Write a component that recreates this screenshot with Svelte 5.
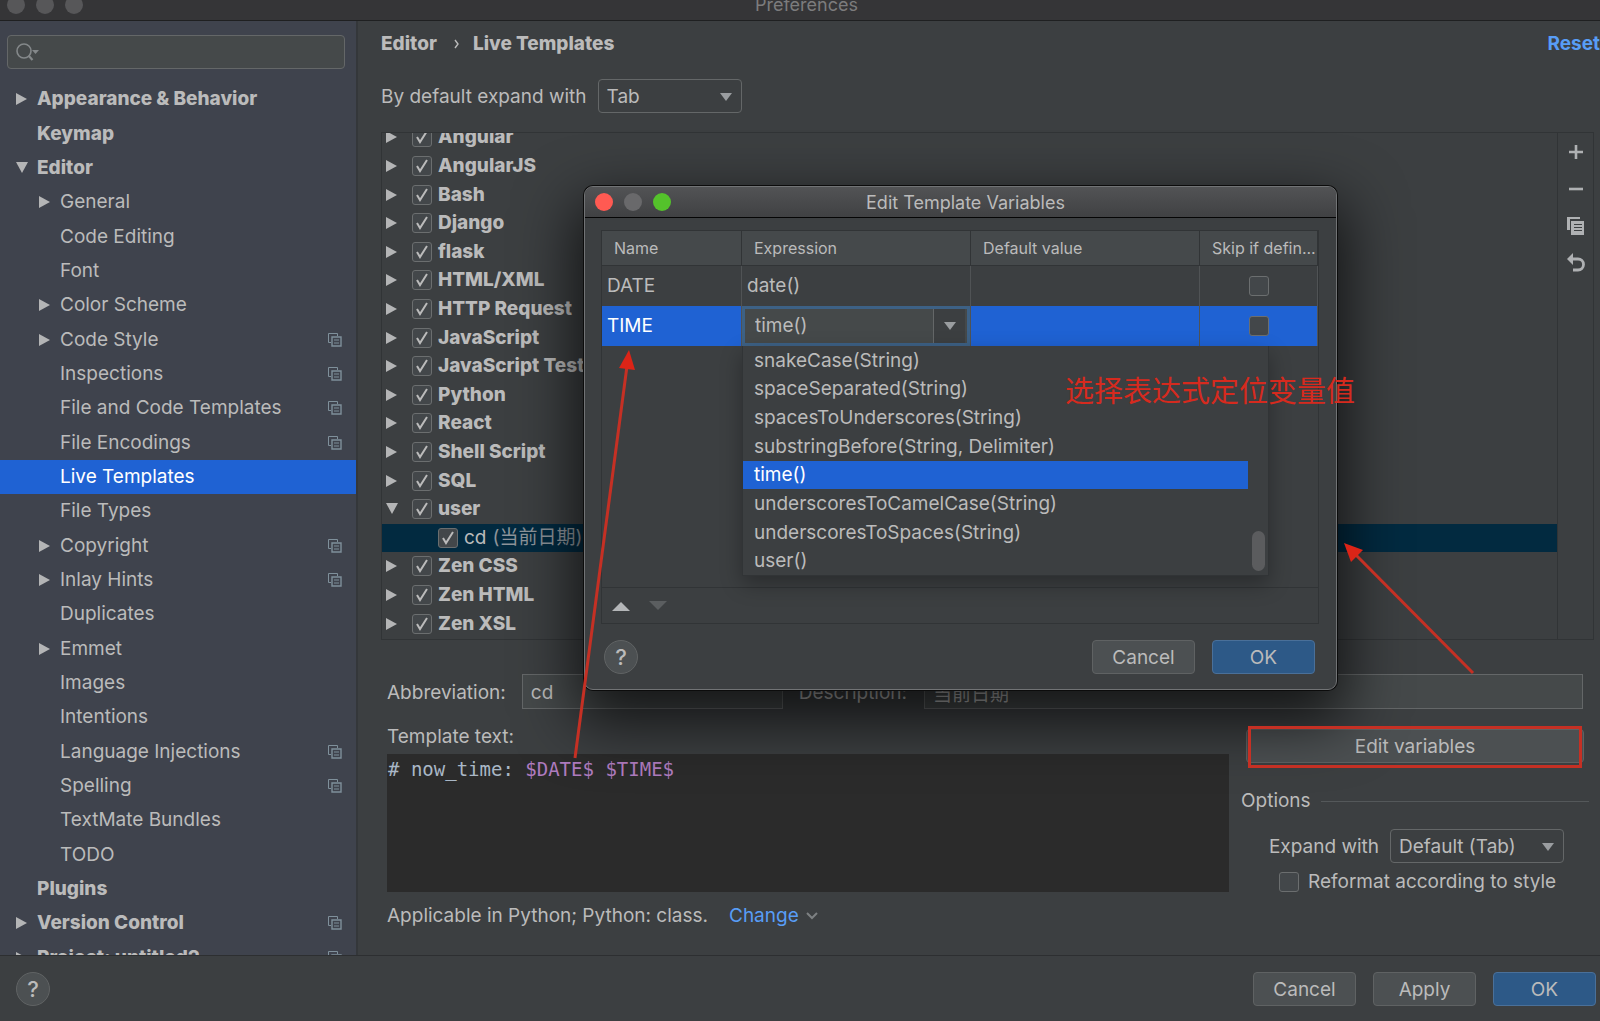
<script lang="ts">
  interface TreeItem {
    label: string;
    level: 0 | 1;
    /** open / closed arrow, nothing for leaves */
    arrow?: 'open' | 'closed';
    /** marks settings stored per project */
    project?: boolean;
  }

  interface TemplateGroup {
    label: string;
    open?: boolean;
    child?: boolean;
    note?: string;
  }

  const tree: TreeItem[] = [
    { label: 'Appearance & Behavior', level: 0, arrow: 'closed' },
    { label: 'Keymap', level: 0 },
    { label: 'Editor', level: 0, arrow: 'open' },
    { label: 'General', level: 1, arrow: 'closed' },
    { label: 'Code Editing', level: 1 },
    { label: 'Font', level: 1 },
    { label: 'Color Scheme', level: 1, arrow: 'closed' },
    { label: 'Code Style', level: 1, arrow: 'closed', project: true },
    { label: 'Inspections', level: 1, project: true },
    { label: 'File and Code Templates', level: 1, project: true },
    { label: 'File Encodings', level: 1, project: true },
    { label: 'Live Templates', level: 1 },
    { label: 'File Types', level: 1 },
    { label: 'Copyright', level: 1, arrow: 'closed', project: true },
    { label: 'Inlay Hints', level: 1, arrow: 'closed', project: true },
    { label: 'Duplicates', level: 1 },
    { label: 'Emmet', level: 1, arrow: 'closed' },
    { label: 'Images', level: 1 },
    { label: 'Intentions', level: 1 },
    { label: 'Language Injections', level: 1, project: true },
    { label: 'Spelling', level: 1, project: true },
    { label: 'TextMate Bundles', level: 1 },
    { label: 'TODO', level: 1 },
    { label: 'Plugins', level: 0 },
    { label: 'Version Control', level: 0, arrow: 'closed', project: true },
    { label: 'Project: untitled2', level: 0, arrow: 'closed', project: true },
  ];

  const groups: TemplateGroup[] = [
    { label: 'Angular' },
    { label: 'AngularJS' },
    { label: 'Bash' },
    { label: 'Django' },
    { label: 'flask' },
    { label: 'HTML/XML' },
    { label: 'HTTP Request' },
    { label: 'JavaScript' },
    { label: 'JavaScript Testing' },
    { label: 'Python' },
    { label: 'React' },
    { label: 'Shell Script' },
    { label: 'SQL' },
    { label: 'user', open: true },
    { label: 'cd', child: true, note: '(当前日期)' },
    { label: 'Zen CSS' },
    { label: 'Zen HTML' },
    { label: 'Zen XSL' },
  ];

  const expressions = [
    'snakeCase(String)',
    'spaceSeparated(String)',
    'spacesToUnderscores(String)',
    'substringBefore(String, Delimiter)',
    'time()',
    'underscoresToCamelCase(String)',
    'underscoresToSpaces(String)',
    'user()',
  ];

  let selectedPage = $state('Live Templates');
  let expression = $state('time()');
</script>

{#snippet arrow(open: boolean)}
  <svg class="arrow" width="12" height="12" viewBox="0 0 12 12" aria-hidden="true">
    <path d={open ? 'M0 0h12L6 11z' : 'M0 0v12L11 6z'} fill="currentColor" />
  </svg>
{/snippet}

{#snippet caret()}
  <svg class="caret" width="12" height="8" viewBox="0 0 12 8" aria-hidden="true">
    <path d="M0 0h12L6 8z" fill="currentColor" />
  </svg>
{/snippet}

{#snippet tick()}
  <svg class="tick" width="20" height="20" viewBox="0 0 20 20" aria-hidden="true">
    <path d="M5 10l3 5 7-11" fill="none" stroke="currentColor" stroke-width="2" />
  </svg>
{/snippet}

<div class="window">
  <header class="titlebar">
    <span class="lights"><i></i><i></i><i></i></span>
    <span class="title">Preferences</span>
  </header>

  <div class="body">
    <aside class="sidebar">
      <div class="search">
        <svg width="24" height="18" viewBox="0 0 24 18" aria-hidden="true">
          <circle cx="8" cy="8" r="7" fill="none" stroke="currentColor" stroke-width="1.6" />
          <path d="M12.500 12.500l4 4.500" stroke="currentColor" stroke-width="2.200" />
          <path d="M16 7h7l-3.500 4z" fill="currentColor" />
        </svg>
        <input type="text" aria-label="Search settings" />
      </div>
      <nav class="tree">
        {#each tree as item}
          <button
            class="node"
            class:nested={item.level === 1}
            class:selected={item.label === selectedPage}
            onclick={() => (selectedPage = item.label)}
          >
            <span class="slot">
              {#if item.arrow}{@render arrow(item.arrow === 'open')}{/if}
            </span>
            <span class="node-label">{item.label}</span>
            {#if item.project}
              <svg class="project" width="14" height="14" viewBox="0 0 14 14" aria-hidden="true">
                <path d="M3 9.500H.5v-9h9V3" fill="none" stroke="currentColor" />
                <path d="M4 4h9v9H4z" fill="none" stroke="currentColor" stroke-width="1.400" />
                <path d="M6 7h5M6 10h5" stroke="currentColor" />
              </svg>
            {/if}
          </button>
        {/each}
      </nav>
    </aside>

    <main class="page">
      <div class="crumbs">
        <b>Editor</b>
        <svg width="6" height="10" viewBox="0 0 6 10" aria-hidden="true">
          <path d="M1 1l3 4-3 4" fill="none" stroke="currentColor" stroke-width="1.400" />
        </svg>
        <b>Live Templates</b>
        <a href="#reset">Reset</a>
      </div>

      <div class="expand">
        <label for="default-expand">By default expand with</label>
        <span class="select">
          <select id="default-expand"><option>Tab</option><option>Enter</option><option>Space</option></select>
          {@render caret()}
        </span>
      </div>

      <section class="templates">
        <div class="viewport">
          <div class="groups">
            {#each groups as group}
              <div class="group" class:child={group.child}>
                {#if !group.child}
                  <span class="slot">{@render arrow(!!group.open)}</span>
                {/if}
                <label>
                  <span class="check"><input type="checkbox" checked />{@render tick()}</span>
                  <span>{group.label}</span>
                  {#if group.note}<span class="note">{group.note}</span>{/if}
                </label>
              </div>
            {/each}
          </div>
        </div>
        <div class="tools">
          <button aria-label="Add">
            <svg width="20" height="20" viewBox="0 0 20 20"><path d="M10 3v14M3 10h14" stroke="currentColor" stroke-width="2.600" /></svg>
          </button>
          <button aria-label="Remove">
            <svg width="20" height="20" viewBox="0 0 20 20"><path d="M3 10h14" stroke="currentColor" stroke-width="2.600" /></svg>
          </button>
          <button aria-label="Duplicate">
            <svg width="20" height="20" viewBox="0 0 20 20">
              <path d="M1 1h13v2H4v11H1z" fill="currentColor" />
              <path fill-rule="evenodd" d="M5 5h13v14H5zM8 8v1h8V8zM8 11v1h8v-1zM8 14v1h8v-1z" fill="currentColor" />
            </svg>
          </button>
          <button aria-label="Revert">
            <svg width="20" height="20" viewBox="0 0 20 20">
              <path d="M6 6h6a5.500 5.500 0 0 1 0 11H7" fill="none" stroke="currentColor" stroke-width="2.800" />
              <path d="M1 6l6-6v12z" fill="currentColor" />
            </svg>
          </button>
        </div>
      </section>

      <div class="fields">
        <label for="abbreviation">Abbreviation:</label>
        <input id="abbreviation" class="abbreviation" type="text" value="cd" />
        <label for="description">Description:</label>
        <input id="description" class="description" type="text" value="当前日期" />
      </div>

      <div class="details">
        <div class="text-column">
          <div class="line" id="template-label">Template text:</div>
          <div class="code" role="textbox" tabindex="0" aria-labelledby="template-label"># now_time: <span>$DATE$</span> <span>$TIME$</span></div>
          <div class="line context">
            <span>Applicable in Python; Python: class.</span>
            <a href="#change">Change</a>
            <svg width="12" height="8" viewBox="0 0 12 8" aria-hidden="true">
              <path d="M1 1l5 5 5-5" fill="none" stroke="currentColor" stroke-width="2" />
            </svg>
          </div>
        </div>

        <div class="options">
          <button class="button edit">Edit variables</button>
          <div class="line legend">Options</div>
          <div class="option-row">
            <label for="expand-with">Expand with</label>
            <span class="select">
              <select id="expand-with"><option>Default (Tab)</option><option>Enter</option><option>Space</option></select>
              {@render caret()}
            </span>
          </div>
          <label class="line reformat">
            <span class="check"><input type="checkbox" /></span>
            Reformat according to style
          </label>
        </div>
      </div>
    </main>
  </div>

  <footer class="footer">
    <button class="help" aria-label="Help">?</button>
    <button class="button">Cancel</button>
    <button class="button">Apply</button>
    <button class="button primary">OK</button>
  </footer>

  <div class="dialog" role="dialog" aria-labelledby="dialog-title">
    <header class="dialog-bar">
      <span class="lights"><i class="close"></i><i></i><i class="zoom"></i></span>
      <span class="title" id="dialog-title">Edit Template Variables</span>
    </header>

    <div class="variables">
      <table>
        <colgroup><col class="col-name" /><col class="col-wide" /><col class="col-wide" /><col /></colgroup>
        <thead>
          <tr><th>Name</th><th>Expression</th><th>Default value</th><th>Skip if defin...</th></tr>
        </thead>
        <tbody>
          <tr>
            <td>DATE</td>
            <td>date()</td>
            <td></td>
            <td class="skip"><span class="check"><input type="checkbox" aria-label="Skip DATE if defined" /></span></td>
          </tr>
          <tr class="active">
            <td>TIME</td>
            <td class="editing">
              <div class="combo">
                <input type="text" aria-label="Expression" bind:value={expression} />
                <button aria-label="Show expressions">{@render caret()}</button>
                <div class="popup">
                  <ul role="listbox" aria-label="Expressions">
                    {#each expressions as item}
                      <li role="option" aria-selected={item === expression}>{item}</li>
                    {/each}
                  </ul>
                  <div class="scrollbar"><i></i></div>
                </div>
              </div>
            </td>
            <td></td>
            <td class="skip"><span class="check"><input type="checkbox" aria-label="Skip TIME if defined" /></span></td>
          </tr>
        </tbody>
      </table>
      <div class="move">
        <button aria-label="Move up">
          <svg width="18" height="10" viewBox="0 0 18 10"><path d="M0 10h18L9 1z" fill="currentColor" /></svg>
        </button>
        <button aria-label="Move down" disabled>
          <svg width="18" height="10" viewBox="0 0 18 10"><path d="M0 0h18L9 9z" fill="currentColor" /></svg>
        </button>
      </div>
    </div>

    <div class="dialog-actions">
      <button class="help" aria-label="Help">?</button>
      <button class="button">Cancel</button>
      <button class="button primary">OK</button>
    </div>
  </div>

  <!-- red callouts drawn over the windows -->
  <svg class="marks" width="1600" height="1021" viewBox="0 0 1600 1021" aria-hidden="true">
    <g fill="none" stroke="#c53024" stroke-width="3">
      <path d="M575 758L627 366" />
      <path d="M1473 673L1354 553" />
      <path d="M1249.500 727.500h331v39h-331z" />
    </g>
    <path d="M629 350l-10 18 16 2z" fill="#dc2417" />
    <path d="M1344 543l7 19 12-12z" fill="#dc2417" />
  </svg>
  <p class="remark">选择表达式定位变量值</p>
</div>

<style>
  :global(body) {
    background: #3c3f41;
  }

  .window {
    --text: #bbbbbb;
    --panel: #3c3f41;
    --line: #313436;
    --field: #45494a;
    --border: #646768;
    --accent: #1f62d3;
    position: relative;
    display: flex;
    flex-direction: column;
    height: 100vh;
    overflow: hidden;
    background: var(--panel);
    color: var(--text);
    font: 19px/24px Inter, 'Noto Sans CJK SC', sans-serif;
  }

  button,
  input,
  select {
    margin: 0;
    padding: 0;
    border: 0;
    background: none;
    color: inherit;
    font: inherit;
  }

  input,
  select {
    box-sizing: border-box;
    outline: none;
    appearance: none;
  }

  a {
    color: #589df6;
    text-decoration: none;
  }

  svg {
    display: block;
    flex: none;
  }

  /* title bars */
  .titlebar {
    display: flex;
    align-items: center;
    flex: none;
    height: 10px;
    padding: 0 0 10px 7px;
    border-bottom: 1px solid #1f2021;
    background: #353537;
    color: #7c7c7d;
  }

  .title {
    flex: 1;
    font-size: 18px;
    text-align: center;
  }

  .lights {
    display: flex;
    gap: 11px;
    width: 6px;
  }

  .lights i {
    flex: none;
    width: 18px;
    height: 18px;
    border-radius: 50%;
    background: #575759;
  }

  .body {
    display: flex;
    flex: 1;
    min-height: 0;
  }

  /* settings tree */
  .sidebar {
    display: flex;
    flex-direction: column;
    flex: none;
    width: 356px;
    overflow: hidden;
    border-right: 2px solid #34373a;
    background: #3f434d;
  }

  .search {
    display: flex;
    align-items: center;
    flex: none;
    height: 32px;
    margin: 14px 11px 13px 7px;
    padding-left: 8px;
    border: 1px solid var(--border);
    border-radius: 4px;
    background: var(--field);
    color: #84888a;
  }

  .search input {
    flex: 1;
    color: var(--text);
  }

  .tree {
    display: flex;
    flex: 1 0 auto;
    flex-direction: column;
    height: 0;
    margin-bottom: -20px;
  }

  .node {
    display: flex;
    flex: 1 0 0;
    align-items: center;
    min-height: 0;
    padding: 0 14px 0 16px;
    font-weight: 800;
    text-align: left;
  }

  .node.nested {
    padding-left: 39px;
    font-weight: 400;
  }

  .node.selected {
    background: var(--accent);
    color: #fff;
  }

  .slot {
    flex: none;
    width: 21px;
  }

  .arrow {
    color: #b4b5b6;
  }

  .node-label {
    flex: 1;
    white-space: nowrap;
  }

  .project {
    color: #7f909b;
  }

  /* page */
  .page {
    display: flex;
    flex: 1;
    flex-direction: column;
    min-width: 0;
    padding-left: 23px;
  }

  .crumbs {
    display: flex;
    align-items: center;
    gap: 17px;
    margin-top: 11px;
  }

  .crumbs b {
    font-weight: 800;
  }

  .crumbs svg {
    margin-right: -4px;
  }

  .crumbs a {
    margin: 0 0 0 auto;
    font-weight: 700;
  }

  .expand {
    display: flex;
    align-items: center;
    gap: 11px;
    margin-top: 23px;
  }

  .expand label,
  .option-row label {
    padding-top: 2px;
  }

  .select {
    position: relative;
    display: block;
    width: 144px;
  }

  .select select {
    width: 100%;
    height: 34px;
    padding: 2px 8px 0;
    border: 1px solid var(--border);
    border-radius: 4px;
  }

  .select .caret {
    position: absolute;
    top: 14px;
    right: 10px;
    pointer-events: none;
  }

  .caret {
    color: #9a9da0;
  }

  .templates {
    display: flex;
    flex: 1;
    min-height: 0;
    margin: 19px 6px 34px 0;
    border: 1px solid var(--line);
  }

  .viewport {
    flex: 1;
    overflow: hidden;
  }

  .groups {
    display: flex;
    flex-direction: column;
    height: calc(100% + 9px);
    margin-top: -10px;
  }

  .group {
    display: flex;
    flex: 1;
    align-items: center;
    min-height: 0;
    padding-left: 4px;
    font-weight: 800;
  }

  .group .slot {
    width: 26px;
  }

  .group.child {
    padding-left: 56px;
    background: #022a40;
    font-weight: 400;
  }

  .group label {
    display: flex;
    align-items: center;
    gap: 6px;
    white-space: nowrap;
  }

  .note {
    color: #8d949a;
  }

  .check {
    position: relative;
    display: block;
    flex: none;
    width: 20px;
    height: 20px;
  }

  .check input {
    display: block;
    width: 20px;
    height: 20px;
    border: 1px solid #6b6e6f;
    border-radius: 3px;
    background: #43474a;
  }

  .tick {
    position: absolute;
    inset: 0;
    pointer-events: none;
  }

  .tools {
    display: flex;
    flex-direction: column;
    gap: 17px;
    padding: 9px 7px 9px 8px;
    border-left: 1px solid var(--line);
    color: #afb1b3;
  }

  .tools button {
    height: 20px;
  }

  .fields {
    display: flex;
    align-items: center;
    margin: 0 17px 0 6px;
  }

  .fields label {
    padding-top: 2px;
  }

  .fields input {
    height: 35px;
    padding: 2px 8px 0;
    border: 1px solid var(--border);
    background: var(--field);
  }

  .fields .abbreviation {
    width: 261px;
    margin: 0 16px;
  }

  .fields .description {
    flex: 1;
    min-width: 0;
    margin-left: 17px;
  }

  .details {
    display: flex;
    gap: 12px;
    margin: 16px 11px 27px 6px;
  }

  .text-column {
    flex: 1;
    min-width: 0;
  }

  .line {
    height: 24px;
  }

  .code {
    height: 135px;
    margin: 5px 0 12px;
    padding: 3px 1px 0;
    background: #2b2b2b;
    color: #a9b7c6;
    font-family: 'DejaVu Sans Mono', monospace;
    white-space: pre;
  }

  .code span {
    color: #b07cc0;
  }

  .context {
    display: flex;
    align-items: center;
  }

  .context a {
    margin: 0 7px 0 21px;
  }

  .context svg {
    color: #7d8082;
  }

  .options {
    flex: none;
    width: 348px;
  }

  .button {
    box-sizing: border-box;
    width: 103px;
    height: 34px;
    padding-top: 2px;
    border: 1px solid #5f6263;
    border-radius: 4px;
    background: #4c5052;
  }

  .button.primary {
    border-color: #4a7099;
    background: #2d5987;
  }

  .button.edit {
    display: block;
    width: auto;
    min-width: 338px;
    margin: 4px 5px 0;
  }

  .legend {
    display: flex;
    align-items: center;
    gap: 10px;
    margin-top: 26px;
  }

  .legend::after {
    flex: 1;
    height: 1px;
    background: #54585a;
    content: '';
  }

  .option-row {
    display: flex;
    align-items: center;
    justify-content: flex-end;
    gap: 11px;
    margin: 16px 25px 7px 0;
  }

  .option-row .select {
    width: 174px;
  }

  .reformat {
    display: flex;
    align-items: center;
    gap: 9px;
    padding-left: 38px;
    white-space: nowrap;
  }

  .footer {
    display: flex;
    flex: none;
    align-items: center;
    gap: 17px;
    height: 65px;
    padding: 0 4px 0 16px;
    border-top: 1px solid #2d2f31;
  }

  .help {
    box-sizing: border-box;
    width: 34px;
    height: 34px;
    margin-right: auto;
    border: 1px solid #606364;
    border-radius: 50%;
    background: #4c5052;
    font-size: 22px;
    font-weight: 500;
  }

  /* variables dialog */
  .dialog {
    position: absolute;
    top: 186px;
    left: 584px;
    box-sizing: border-box;
    width: 753px;
    border: 1px solid #717375;
    border-radius: 9px;
    background: var(--panel);
    box-shadow:
      0 0 0 1px #0c0c0c,
      0 24px 60px 8px rgba(0, 0, 0, 0.7);
  }

  .dialog-bar {
    display: flex;
    align-items: center;
    height: 30px;
    padding-left: 10px;
    border-bottom: 1px solid #050505;
    border-radius: 8px 8px 0 0;
    background: linear-gradient(#525355, #404143);
  }

  .dialog-bar .title {
    padding-top: 2px;
  }

  .dialog-bar .lights {
    width: 0;
  }

  .dialog-bar .lights i {
    background: #69696b;
  }

  .dialog-bar .lights .close {
    background: #ff5a52;
  }

  .dialog-bar .lights .zoom {
    background: #54c22b;
  }

  .variables {
    display: flex;
    flex-direction: column;
    height: 392px;
    margin: 12px 17px 16px 16px;
    border: 1px solid var(--line);
  }

  table {
    width: 100%;
    border-collapse: separate;
    border-spacing: 0;
    table-layout: fixed;
  }

  .col-name {
    width: 140px;
  }

  .col-wide {
    width: 229px;
  }

  th,
  td {
    box-sizing: border-box;
    padding: 0 0 0 5px;
    border-right: 1px solid #505355;
    text-align: left;
  }

  th {
    height: 35px;
    padding-left: 12px;
    border-right-color: var(--line);
    border-bottom: 1px solid var(--line);
    background: #45494b;
    font-size: 16px;
    font-weight: 400;
    white-space: nowrap;
  }

  td {
    height: 40px;
  }

  .active td {
    background: var(--accent);
    color: #fff;
  }

  .skip {
    padding: 0;
  }

  .skip .check {
    margin: 0 auto;
  }

  .active td.editing {
    padding: 0;
    color: var(--text);
  }

  .combo {
    position: relative;
    display: flex;
    box-sizing: border-box;
    height: 40px;
    padding-right: 2px;
    border: 3px solid #3d6185;
    background: var(--field);
  }

  .combo > input {
    flex: 1;
    min-width: 0;
    padding-left: 10px;
  }

  .combo > button {
    display: grid;
    place-items: center;
    width: 32px;
    border-left: 1px solid var(--border);
    background: var(--panel);
  }

  .popup {
    position: absolute;
    top: 37px;
    left: -3px;
    z-index: 1;
    display: flex;
    width: 525px;
    height: 229px;
    border: 1px solid var(--line);
    border-top: 0;
    background: var(--panel);
    box-shadow: 0 8px 20px rgba(0, 0, 0, 0.3);
  }

  .popup ul {
    display: flex;
    flex: 1;
    flex-direction: column;
    margin: 0;
    padding: 0;
    list-style: none;
  }

  .popup li {
    display: flex;
    flex: 1;
    align-items: center;
    padding: 1px 0 0 11px;
  }

  .popup li[aria-selected='true'] {
    background: var(--accent);
    color: #fff;
  }

  .scrollbar {
    display: flex;
    align-items: flex-end;
    width: 13px;
    padding: 4px 3px 4px 4px;
  }

  .scrollbar i {
    width: 13px;
    height: 40px;
    border-radius: 7px;
    background: #5b5c5e;
  }

  .move {
    display: flex;
    gap: 19px;
    height: 35px;
    margin-top: auto;
    padding-left: 10px;
    border-top: 1px solid var(--line);
    color: #b4b6b8;
  }

  .move button:disabled {
    color: #5b5e60;
  }

  .dialog-actions {
    display: flex;
    align-items: center;
    gap: 17px;
    padding: 0 21px 15px 19px;
  }

  /* callouts */
  .marks,
  .remark {
    position: absolute;
    z-index: 2;
    pointer-events: none;
  }

  .marks {
    top: 0;
    left: 0;
  }

  .remark {
    top: 369px;
    left: 1065px;
    margin: 0;
    color: #d62a1e;
    font: 29px/40px 'Noto Sans CJK SC', sans-serif;
  }
</style>
